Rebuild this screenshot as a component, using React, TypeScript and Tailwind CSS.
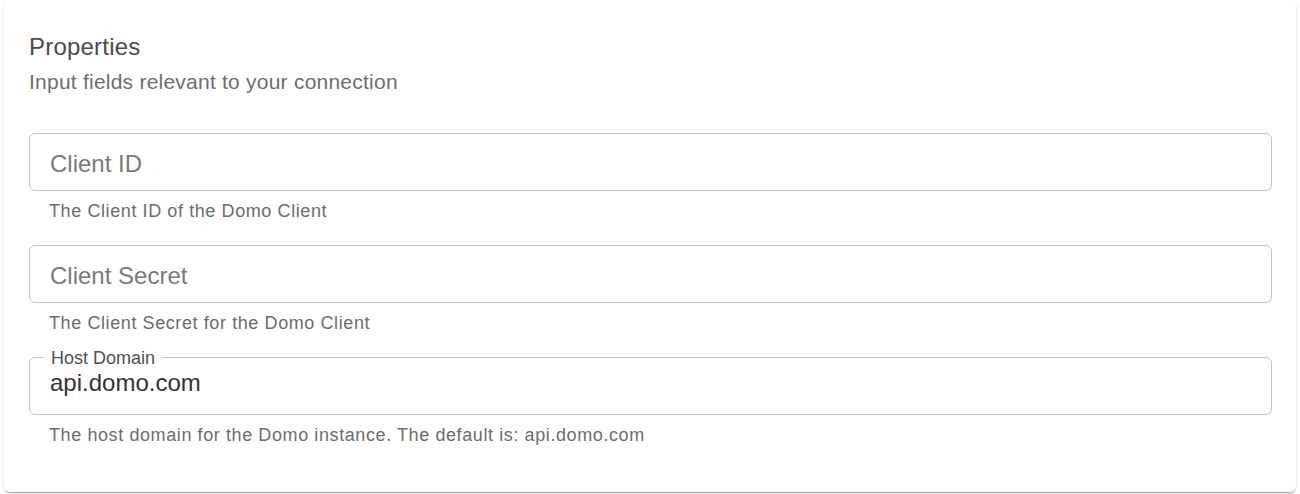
import React from "react";

type Field = {
  name: string;
  label?: string;
  placeholder?: string;
  value?: string;
  helper: string;
};

const fields: Field[] = [
  {
    name: "clientId",
    placeholder: "Client ID",
    helper: "The Client ID of the Domo Client",
  },
  {
    name: "clientSecret",
    placeholder: "Client Secret",
    helper: "The Client Secret for the Domo Client",
  },
  {
    name: "hostDomain",
    label: "Host Domain",
    value: "api.domo.com",
    helper: "The host domain for the Domo instance. The default is: api.domo.com",
  },
];

function TextField({ field }: { field: Field }) {
  return (
    <div className="flex flex-col">
      <div className="relative h-[58px] border border-[#c4c4c4] rounded-[6px] flex">
        {field.label && (
          <span className="absolute left-[14px] top-[-9px] bg-white px-[7px] text-[18px] leading-[18px] text-[#4f4f4f]">
            {field.label}
          </span>
        )}
        <input
          name={field.name}
          defaultValue={field.value}
          placeholder={field.placeholder}
          className={
            "w-full h-full bg-transparent px-[20px] text-[24px] text-[#333333] placeholder:text-[#7a7a7a] outline-none " +
            (field.label ? "pb-[7px]" : "pt-[3px]")
          }
        />
      </div>
      <p className="mt-[8px] pl-[20px] text-[18px] leading-[24px] tracking-[0.033em] text-[#6c6c6c]">
        {field.helper}
      </p>
    </div>
  );
}

export default function App() {
  return (
    <div
      className="min-h-screen bg-white px-[4px]"
      style={{ fontFamily: '"Liberation Sans", Arial, Helvetica, sans-serif' }}
    >
      <section className="rounded-[6px] bg-white pt-[29px] pl-[25px] pr-[24px] pb-[45px] shadow-[0px_2px_1px_-1px_rgba(0,0,0,0.2),0px_1px_1px_0px_rgba(0,0,0,0.14),0px_1px_3px_0px_rgba(0,0,0,0.12)]">
        <h2 className="text-[24px] leading-[36px] tracking-[0.009em] text-[#4a4a4a]">
          Properties
        </h2>
        <p className="mt-[2px] text-[21px] leading-[30px] tracking-[0.011em] text-[#6e6e6e]">
          Input fields relevant to your connection
        </p>
        <form className="mt-[36px] flex flex-col gap-[22px]">
          {fields.map((f) => (
            <TextField key={f.name} field={f} />
          ))}
        </form>
      </section>
    </div>
  );
}
